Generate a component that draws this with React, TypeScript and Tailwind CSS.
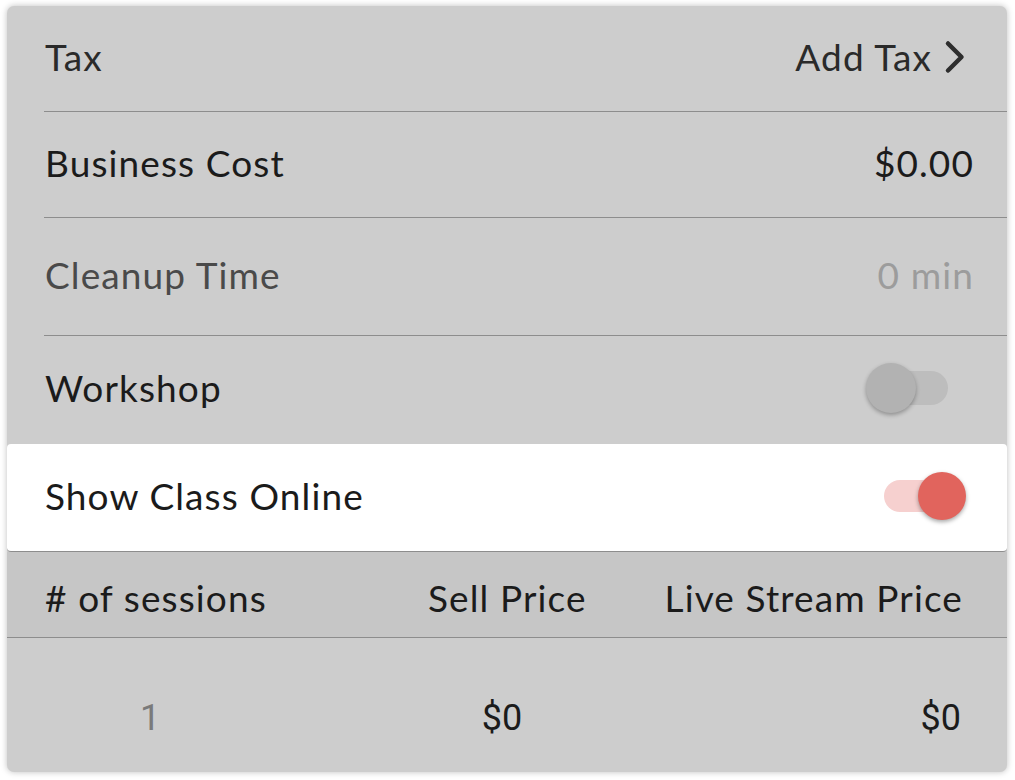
import React from 'react';

const font = { fontFamily: 'Lato, "Open Sans", sans-serif' };

const Chevron = () => (
  <svg width="24" height="34" viewBox="0 0 24 34" className="ml-[11px]">
    <path d="M5 3.5 L18.5 17 L5 30.5" fill="none" stroke="#2e2e2e" strokeWidth="4.5" strokeLinecap="round" strokeLinejoin="round" />
  </svg>
);

const Toggle: React.FC<{ on: boolean }> = ({ on }) =>
  on ? (
    <div className="relative w-[82px] h-[50px] flex items-center">
      <div className="absolute left-0 right-[10px] h-[32px] rounded-full bg-[#f6d0cf]" />
      <div className="absolute right-0 w-[48px] h-[48px] rounded-full bg-[#e1645d] shadow-[0_2px_4px_rgba(0,0,0,0.35)]" />
    </div>
  ) : (
    <div className="relative w-[82px] h-[52px] flex items-center">
      <div className="absolute left-[6px] right-0 h-[34px] rounded-full bg-[#bdbdbd]" />
      <div className="absolute left-0 w-[50px] h-[50px] rounded-full bg-[#b2b2b2] shadow-[0_2px_4px_rgba(0,0,0,0.3)]" />
    </div>
  );

const Row: React.FC<{ h: string; children: React.ReactNode; divider?: boolean }> = ({ h, children, divider = true }) => (
  <div className={`relative ${h} flex items-center justify-between pl-[38px] pr-[33px] pb-[5px]`}>
    {children}
    {divider && <div className="absolute left-[37px] right-0 bottom-0 h-[1.5px] bg-[#8d8d8d]" />}
  </div>
);

export default function App() {
  return (
    <div className="w-[1015px] h-[780px] bg-white pt-[6px] pl-[7px]" style={font}>
      <div className="w-[1000px] h-[766px] rounded-[7px] bg-[#cdcdcd] shadow-[0_0_6px_rgba(0,0,0,0.25)] overflow-hidden flex flex-col text-[37px] tracking-[0.03em] text-[#1b1b1b]">
        <Row h="h-[106px]">
          <span className="text-[#2a2a2a]">Tax</span>
          <span className="flex items-center text-[#2a2a2a] mr-[7px]">
            Add Tax
            <Chevron />
          </span>
        </Row>
        <Row h="h-[106px]">
          <span>Business Cost</span>
          <span>$0.00</span>
        </Row>
        <Row h="h-[118px]">
          <span className="text-[#4a4a4a]">Cleanup Time</span>
          <span className="text-[#9c9c9c]">0 min</span>
        </Row>
        <Row h="h-[108px]" divider={false}>
          <span>Workshop</span>
          <span className="mr-[26px]">
            <Toggle on={false} />
          </span>
        </Row>
        <div className="h-[108px] flex items-center justify-between pl-[38px] pr-[41px] pb-[4px] bg-white rounded-[4px] border-b-[1.5px] border-[#8d8d8d]">
          <span>Show Class Online</span>
          <Toggle on />
        </div>
        <div className="h-[86px] flex items-center bg-[#c6c6c6] border-b-[1.5px] border-[#8d8d8d] pl-[38px] pr-[44px] pt-[6px] whitespace-nowrap">
          <span className="w-[383px]"># of sessions</span>
          <span className="w-[200px]">Sell Price</span>
          <span className="flex-1 text-right">Live Stream Price</span>
        </div>
        <div className="flex-1 flex items-center pl-[38px] pr-[46px] pt-[26px] tracking-normal" style={{ fontFamily: 'Roboto, sans-serif' }}>
          <span className="w-[210px] text-center text-[#7a7a7a] text-[36px]">1</span>
          <span className="w-[494px] text-center text-[36px]">$0</span>
          <span className="flex-1 text-right text-[36px]">$0</span>
        </div>
      </div>
    </div>
  );
}
